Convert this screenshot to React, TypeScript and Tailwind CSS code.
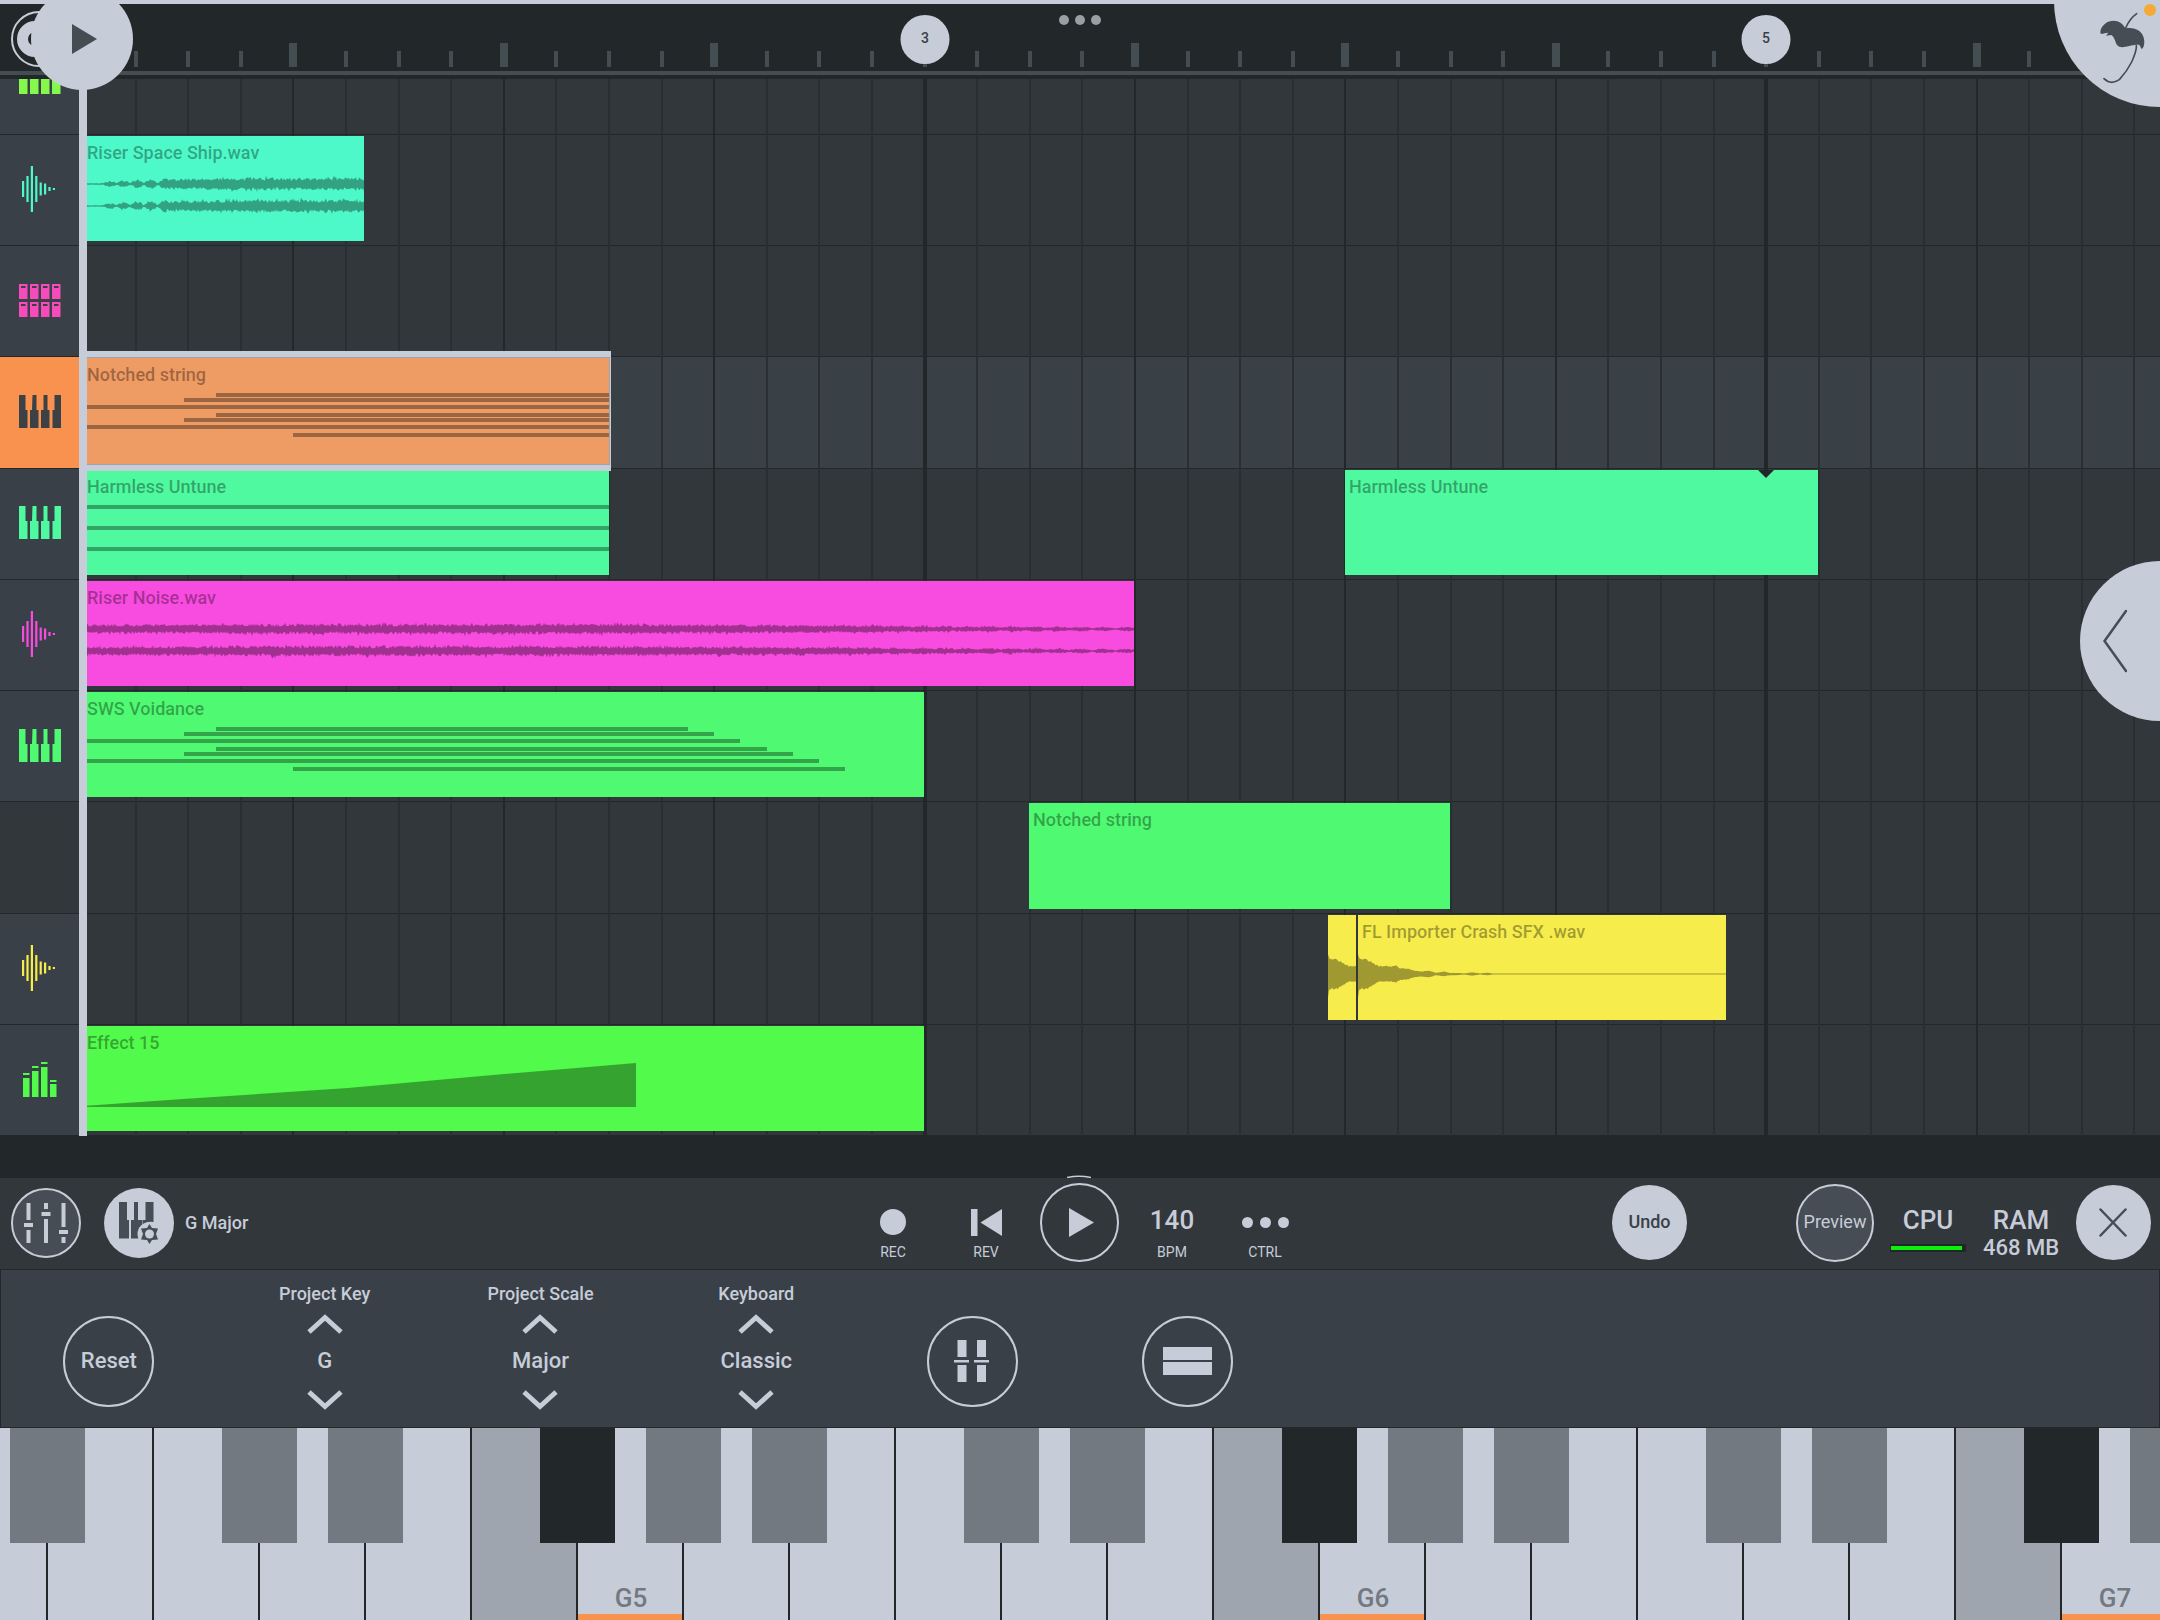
import React from "react";

const STEP = 52.6;
const ORIGIN = 4;
const at = (step: number) => Math.floor(ORIGIN + step * STEP);
const lineAt = (step: number) => Math.round(ORIGIN + step * STEP);

/* ---------- waveforms ---------- */

const noise = (seed: number) => {
  let s = seed;
  return () => {
    s = (s * 16807) % 2147483647;
    return s / 2147483647;
  };
};

function wavePath(width: number, center: number, seed: number, amp: (x: number) => number, jitter: number) {
  const rnd = noise(seed);
  const top: string[] = [];
  const bottom: string[] = [];
  for (let x = 0; x <= width; x += 1) {
    const a = amp(x);
    const up = a * (1 - jitter + rnd() * jitter * (rnd() > 0.85 ? 1.9 : 1.2));
    const dn = a * (1 - jitter + rnd() * jitter * (rnd() > 0.85 ? 1.9 : 1.2));
    top.push(`${x} ${(center - up).toFixed(1)}`);
    bottom.push(`${x} ${(center + dn).toFixed(1)}`);
  }
  return `M${top.join("L")}L${bottom.reverse().join("L")}Z`;
}

const shipAmp = (x: number) => {
  if (x < 20) return 0.8;
  if (x < 85) return 0.9 + Math.abs(Math.sin(((x - 20) / 13) * (Math.PI / 1.05))) * (1.6 + (x - 20) / 20);
  return Math.min(6, 4.8 + (x - 85) / 60);
};

const noiseAmp = (x: number) => {
  if (x < 500) return 4 + Math.min(1, x / 200);
  const fall = 5 - ((x - 500) / 552) * 2.8;
  if (x < 800) return fall;
  const low = 2.6 - ((x - 800) / 252) * 2;
  return low + (fall - low) * Math.abs(Math.cos((x - 952) / 7.26));
};

const crashPoints: [number, number][] = [
  [0, 22], [1, 17], [4, 14.5], [6, 16], [13, 13], [18, 9.5], [22, 7.5], [27, 8], [33, 7.5], [38, 9], [42, 6],
  [50, 5.5], [56, 3.5], [63, 2.5], [71, 3.5], [78, 1.2], [86, 2.4], [92, 1.2], [100, 1.2], [106, 0.6],
  [114, 1.8], [122, 0.6], [130, 1.3], [135, 0.5], [400, 0.5],
];
const crashAmp = (x: number) => {
  for (let i = 1; i < crashPoints.length; i += 1) {
    const [x1, y1] = crashPoints[i];
    const [x0, y0] = crashPoints[i - 1];
    if (x <= x1) return y0 + ((x - x0) / (x1 - x0)) * (y1 - y0);
  }
  return 0.5;
};

/* ---------- track icons ---------- */

function WaveIcon() {
  const bars = [16, 26, 46, 26, 13, 11, 4, 2];
  return (
    <svg width="35" height="46" viewBox="0 0 35 46" fill="currentColor" aria-hidden="true">
      {bars.map((h, i) => (
        <rect key={i} x={i * 4.4} y={23 - h / 2} width="2.2" height={h} />
      ))}
    </svg>
  );
}

function PadsIcon() {
  return (
    <svg width="42" height="33" viewBox="0 0 42 33" aria-hidden="true">
      {[0, 1, 2, 3].map((c) =>
        [0, 18].map((y) => (
          <g key={`${c}-${y}`}>
            <rect x={c * 11} y={y} width="8.5" height="15" fill="currentColor" />
            <rect x={c * 11 + 2} y={y + 2} width="4.5" height="2" fill="#3a3f46" />
          </g>
        )),
      )}
    </svg>
  );
}

function PadFeetIcon() {
  return (
    <svg width="42" height="15" viewBox="0 0 42 15" fill="currentColor" aria-hidden="true">
      {[0, 11, 22, 33].map((x) => (
        <rect key={x} x={x} width="8.5" height="15" />
      ))}
    </svg>
  );
}

function PianoIcon() {
  return (
    <svg width="42" height="33" viewBox="0 0 42 33" fill="currentColor" aria-hidden="true">
      <path d="M0 0h6.500v15h2v18H0zM13.500 0h4v15h2v18h-8.500V15h2zM24.500 0h4v15h2v18H22V15h2.500zM35.500 0H42v33h-8.500V15h2z" />
    </svg>
  );
}

function LevelsIcon() {
  const bars = [
    [19, 24],
    [26, 31],
    [30, 35],
    [13, 17],
  ];
  return (
    <svg width="34" height="36" viewBox="0 0 34 36" fill="currentColor" aria-hidden="true">
      {bars.map(([h, cap], i) => (
        <g key={i}>
          <rect x={i * 9} y={36 - h} width="6.500" height={h} />
          <rect x={i * 9} y={36 - cap} width="6.500" height="2" />
        </g>
      ))}
    </svg>
  );
}

/* ---------- clips ---------- */

type Note = [number, number, number];

function Notes({ items }: { items: Note[] }) {
  return (
    <svg className="absolute inset-0 h-full w-full" fill="black" fillOpacity="0.34" aria-hidden="true">
      {items.map(([x, y, w], i) => (
        <rect key={i} x={x} y={y - 2} width={w} height="4" />
      ))}
    </svg>
  );
}

function Wave({ paths }: { paths: string[] }) {
  return (
    <svg className="absolute inset-0 h-full w-full" fill="black" fillOpacity="0.35" aria-hidden="true">
      {paths.map((d, i) => (
        <path key={i} d={d} />
      ))}
    </svg>
  );
}

type ClipProps = {
  left: number;
  width: number;
  color: string;
  name?: string;
  selected?: boolean;
  children?: React.ReactNode;
};

function Clip({ left, width, color, name, selected, children }: ClipProps) {
  return (
    <button
      type="button"
      aria-label={name ?? "Clip"}
      aria-pressed={!!selected}
      className={`absolute top-px flex items-start overflow-hidden px-1 pt-[5px] text-left ${color} ${
        selected
          ? "bottom-1 z-20 shadow-[0_0_0_1px_#9aa3ae,0_-7px_0_#c7ccd9,0_7px_0_#c7ccd9,2px_-7px_0_#c7ccd9,2px_7px_0_#c7ccd9]"
          : "bottom-1 z-10"
      }`}
      style={{ left, width }}
    >
      <span className="whitespace-nowrap text-[18px] leading-6 text-black/35">{name}</span>
      {children}
    </button>
  );
}

const notchedNotes: Note[] = [
  [133, 37, 400], [101, 42, 430], [0, 49, 530], [133, 57, 400], [101, 62, 430], [0, 69, 530], [210, 77, 320],
];
const voidanceNotes: Note[] = [
  [133, 37, 472], [101, 42, 530], [0, 49, 657], [133, 57, 551], [101, 62, 609], [0, 69, 736], [210, 77, 552],
];
const harmlessNotes: Note[] = [
  [0, 37, 530],
  [0, 58, 530],
  [0, 79, 530],
];

type Track = {
  label: string;
  icon?: React.ReactNode;
  header: string;
  lane?: string;
  clips?: React.ReactNode;
};

const tracks: Track[] = [
  {
    label: "Riser Space Ship",
    icon: <WaveIcon />,
    header: "bg-[#394047] text-[#4df9c9]",
    clips: (
      <Clip left={at(0)} width={281} color="bg-[#4df9c9]" name="Riser Space Ship.wav">
        <Wave paths={[wavePath(281, 48, 71, shipAmp, 0.45), wavePath(281, 70, 193, shipAmp, 0.45)]} />
      </Clip>
    ),
  },
  { label: "Drum pads", icon: <PadsIcon />, header: "bg-[#394047] text-[#f84bbb]" },
  {
    label: "Notched string",
    icon: <PianoIcon />,
    header: "bg-[#f8924e] text-[#3c4145]",
    lane: "bg-[#394046]",
    clips: (
      <Clip left={at(0)} width={526} color="bg-[#ef9b64]" name="Notched string" selected>
        <Notes items={notchedNotes} />
      </Clip>
    ),
  },
  {
    label: "Harmless Untune",
    icon: <PianoIcon />,
    header: "bg-[#394047] text-[#4ef99f]",
    clips: (
      <>
        <Clip left={at(0)} width={526} color="bg-[#4ef99f]" name="Harmless Untune">
          <Notes items={harmlessNotes} />
        </Clip>
        <Clip left={at(24)} width={473} color="bg-[#4ef99f]" name="Harmless Untune">
          <svg className="absolute top-0 left-[413px]" width="16" height="8" viewBox="0 0 16 8" aria-hidden="true">
            <path d="M0 0h16L8 8z" fill="#22272a" />
          </svg>
        </Clip>
      </>
    ),
  },
  {
    label: "Riser Noise",
    icon: <WaveIcon />,
    header: "bg-[#394047] text-[#f84bdf]",
    clips: (
      <Clip left={at(0)} width={1051} color="bg-[#f84bdf]" name="Riser Noise.wav">
        <Wave paths={[wavePath(1051, 48, 517, noiseAmp, 0.5), wavePath(1051, 70, 881, noiseAmp, 0.5)]} />
      </Clip>
    ),
  },
  {
    label: "SWS Voidance",
    icon: <PianoIcon />,
    header: "bg-[#394047] text-[#4ff972]",
    clips: (
      <Clip left={at(0)} width={841} color="bg-[#4ff972]" name="SWS Voidance">
        <Notes items={voidanceNotes} />
      </Clip>
    ),
  },
  {
    label: "Empty track",
    header: "bg-[#32373b]",
    clips: <Clip left={at(18)} width={421} color="bg-[#4ff972]" name="Notched string" />,
  },
  {
    label: "Crash",
    icon: <WaveIcon />,
    header: "bg-[#394047] text-[#f6ec4c]",
    clips: (
      <>
        <Clip left={1249} width={28} color="bg-[#f6ec4c]">
          <Wave paths={[wavePath(28, 59, 37, crashAmp, 0.1)]} />
        </Clip>
        <Clip left={1279} width={368} color="bg-[#f6ec4c]" name="FL Importer Crash SFX .wav">
          <Wave paths={[wavePath(368, 59, 37, crashAmp, 0.1)]} />
        </Clip>
      </>
    ),
  },
  {
    label: "Effect 15",
    icon: <LevelsIcon />,
    header: "bg-[#394047] text-[#52fa4b]",
    clips: (
      <Clip left={at(0)} width={841} color="bg-[#52fa4b]" name="Effect 15">
        <Wave paths={["M0 80L100 73L265 62L410 49L553 37V81H0Z"]} />
      </Clip>
    ),
  },
];

const steps = Array.from({ length: 72 }, (_, i) => i + 1);

/* ---------- sections ---------- */

function Ruler() {
  return (
    <div className="relative h-[79px] overflow-hidden border-t-4 border-[#c7ccd9] bg-[#22272a]">
      <div className="absolute inset-x-0 top-[67px] h-1 bg-[#444d50]" />
      <div className="absolute inset-y-0 right-0 left-[79px]">
        {steps.map((s) => (
          <span
            key={s}
            className={`absolute bottom-3 -translate-x-1/2 bg-[#444d52] ${s % 4 === 0 && s % 16 !== 0 ? "h-6 w-2" : "h-4 w-1"}`}
            style={{ left: lineAt(s) }}
          />
        ))}
        {[3, 5].map((bar) => (
          <button
            key={bar}
            type="button"
            className="absolute top-[11px] size-[49px] -translate-x-1/2 rounded-full bg-[#c7ccd9] pb-0.5 text-[14px] text-[#3a4046]"
            style={{ left: lineAt((bar - 1) * 8) }}
          >
            {bar}
          </button>
        ))}
      </div>
      <div className="absolute top-[11px] left-1/2 flex -translate-x-1/2 gap-1.5">
        <span className="size-2.5 rounded-full bg-[#9a9fa3]" />
        <span className="size-2.5 rounded-full bg-[#9a9fa3]" />
        <span className="size-2.5 rounded-full bg-[#9a9fa3]" />
      </div>
    </div>
  );
}

function Playlist() {
  return (
    <div className="relative flex flex-1 flex-col overflow-hidden bg-[#32373b]">
      <div className="flex h-14 border-b border-[#22272a]">
        <div className="flex w-[79px] justify-center bg-[#394047] text-[#84f94c]">
          <PadFeetIcon />
        </div>
      </div>
      <div className="grid flex-1 auto-rows-fr">
        {tracks.map((t) => (
          <div key={t.label} className="flex min-h-24 border-b border-[#22272a]">
            <button
              type="button"
              aria-label={t.label}
              className={`flex w-[79px] items-center justify-center pb-0.5 ${t.header}`}
            >
              {t.icon}
            </button>
            <div className={`relative flex-1 ${t.lane ?? ""}`}>{t.clips}</div>
          </div>
        ))}
      </div>
      <div className="pointer-events-none absolute inset-y-0 right-0 left-[79px] overflow-hidden">
        {steps.map((s) => (
          <span
            key={s}
            className={`absolute inset-y-0 -translate-x-1/2 ${
              s % 16 === 0 ? "w-1 bg-[#22272a]" : s % 4 === 0 ? "w-0.5 bg-[#22272a]" : "w-0.5 bg-[#292e32]"
            }`}
            style={{ left: lineAt(s) }}
          />
        ))}
      </div>
      <div className="absolute inset-y-0 left-[79px] z-30 w-2 bg-[#c7ccd9]" />
    </div>
  );
}

function PalmIcon() {
  return (
    <svg width="46" height="72" viewBox="0 0 138 216" fill="none" stroke="#464d54" strokeLinecap="round" aria-hidden="true">
      <path d="M113 5Q92 20 80 48" strokeWidth="5" />
      <path
        d="M4 62C4 48 14 35 28 29C50 21 70 30 79 49C92 46 110 48 121 57C134 68 138 84 135 100Q132 112 127 110L122 100Q117 95 106 99C92 100 84 105 70 106Q56 106 51 94C47 82 45 75 37 69L21 71L28 62L17 64Q4 68 4 62Z"
        fill="#464d54"
        stroke="none"
      />
      <path d="M112 100Q114 114 98 150Q84 178 61 203Q36 220 15 200" strokeWidth="5" />
    </svg>
  );
}

function Overlays() {
  return (
    <>
      <button
        type="button"
        aria-label="Loop"
        className="absolute top-[11px] left-[11px] z-30 flex size-14 items-center rounded-full border-2 border-[#c7ccd9] pl-1"
      >
        <span className="size-9 rounded-full border-[11px] border-[#c7ccd9]" />
      </button>
      <button
        type="button"
        aria-label="Play from position"
        className="absolute -top-3 left-[31px] z-40 flex size-[102px] items-center justify-center rounded-full bg-[#c7ccd9] pl-1"
      >
        <svg width="25" height="30" viewBox="0 0 25 30" fill="#464d52" aria-hidden="true">
          <path d="M0 0L25 15L0 30z" />
        </svg>
      </button>
      <button
        type="button"
        aria-label="Home menu"
        className="absolute top-0 right-0 z-40 flex h-[107px] w-[106px] items-start rounded-bl-full bg-[#c7ccd9] pt-3 pl-[45px]"
      >
        <PalmIcon />
        <span className="absolute top-1 right-1 size-3 rounded-full bg-[#f6a934]" />
      </button>
      <button
        type="button"
        aria-label="Open side panel"
        className="absolute top-[561px] right-0 z-40 flex h-40 w-20 items-center rounded-l-full bg-[#c7ccd9] pl-[23px]"
      >
        <svg width="24" height="64" viewBox="0 0 24 64" fill="none" stroke="#464d54" strokeWidth="2.500" strokeLinecap="round" aria-hidden="true">
          <path d="M23 2L1.500 32L23 62" />
        </svg>
      </button>
    </>
  );
}

function MixerIcon() {
  return (
    <svg width="44" height="40" viewBox="0 0 44 40" fill="#c7ccd9" aria-hidden="true">
      <path d="M2.500 0h4v17h-4zM0 20h9v4H0zM2.500 27h4v13h-4zM20 0h4v6h-4zM17.500 9h9v4h-9zM20 16h4v24h-4zM37.500 0h4v24h-4zM35 27h9v4h-9zM37.500 34h4v6h-4z" />
    </svg>
  );
}

function KeysSettingsIcon() {
  return (
    <svg width="40" height="42" viewBox="0 0 40 42" aria-hidden="true">
      <path
        fill="#464d54"
        d="M0 0h8v18h2v18.500H0zM15 0h4v18h4.500V27L20 36.500h-8V18h3zM26.500 0h8v20Q28 19 24 23V18h2.500z"
      />
      <circle cx="30.500" cy="32" r="12" fill="#c7ccd9" />
      <path
        fill="#464d54"
        d="M30.500 22L33 26L39 26.500L37 32L39 37.500L33 38L30.500 42L28 38L22 37.500L24 32L22 26.500L28 26Z"
      />
      <circle cx="30.500" cy="32" r="4.500" fill="#c7ccd9" />
    </svg>
  );
}

function TransportItem({ label, children }: { label: string; children: React.ReactNode }) {
  return (
    <button type="button" className="flex w-[93px] flex-col items-center pt-[26px]">
      <span className="flex h-9 items-center">{children}</span>
      <span className="mt-1 text-[14px] leading-4 font-normal">{label}</span>
    </button>
  );
}

function Transport() {
  return (
    <div className="relative z-10 grid h-[92px] grid-cols-[1fr_auto_1fr] border-b border-[#22272a] bg-[#32373b] text-[#c7ccd9]">
      <div className="flex items-center pb-0.5 pl-[11px]">
        <button
          type="button"
          aria-label="Mixer"
          className="flex size-[70px] items-center justify-center rounded-full border-2 border-[#c7ccd9] bg-[#464d54]"
        >
          <MixerIcon />
        </button>
        <button
          type="button"
          aria-label="Keyboard settings"
          className="ml-[23px] flex size-[70px] items-center justify-center rounded-full bg-[#c7ccd9]"
        >
          <KeysSettingsIcon />
        </button>
        <span className="ml-[11px] text-[18px] leading-6">G Major</span>
      </div>
      <div className="relative flex pr-0.5">
        <svg className="absolute -top-[3px] left-[220px]" width="24" height="3" viewBox="0 0 24 3" fill="none" aria-hidden="true">
          <path d="M0 2.500Q12 0 24 2.500" stroke="#c7ccd9" strokeWidth="1.500" />
        </svg>
        <TransportItem label="REC">
          <span className="size-[26px] rounded-full bg-[#c7ccd9]" />
        </TransportItem>
        <TransportItem label="REV">
          <svg width="31" height="27" viewBox="0 0 31 27" fill="currentColor" aria-hidden="true">
            <path d="M0 0h6.500v27H0zM31 0v27L9.500 13.500z" />
          </svg>
        </TransportItem>
        <div className="flex w-[93px] items-center justify-center pb-0.5">
          <button
            type="button"
            aria-label="Play"
            className="flex size-[79px] items-center justify-center rounded-full border-2 border-[#c7ccd9] pl-1"
          >
            <svg width="25" height="29" viewBox="0 0 25 29" fill="currentColor" aria-hidden="true">
              <path d="M0 0L25 14.500L0 29z" />
            </svg>
          </button>
        </div>
        <TransportItem label="BPM">
          <span className="pb-1 text-[26px] leading-8">140</span>
        </TransportItem>
        <TransportItem label="CTRL">
          <span className="flex gap-[7px]">
            <span className="size-[11px] rounded-full bg-[#c7ccd9]" />
            <span className="size-[11px] rounded-full bg-[#c7ccd9]" />
            <span className="size-[11px] rounded-full bg-[#c7ccd9]" />
          </span>
        </TransportItem>
      </div>
      <div className="flex items-center justify-end pr-[9px] pb-0.5">
        <button type="button" className="size-[75px] rounded-full bg-[#c7ccd9] pb-0.5 text-[18px] text-[#3a4046]">
          Undo
        </button>
        <button
          type="button"
          className="ml-[109px] flex size-[78px] items-center justify-center rounded-full border-2 border-[#c7ccd9] bg-[#464d54] pb-0.5 text-[18px] font-normal"
        >
          Preview
        </button>
        <div className="ml-4 flex w-[76px] flex-col items-center self-stretch pt-[26px]">
          <span className="text-[26px] leading-8">CPU</span>
          <span className="mt-2 flex h-2 w-full items-center bg-[#22272a] pr-1 pl-px">
            <span className="h-1 w-full bg-[#0cf00c]" />
          </span>
        </div>
        <div className="ml-3 flex w-[86px] flex-col items-center self-stretch pt-[26px]">
          <span className="text-[26px] leading-8">RAM</span>
          <span className="text-[22px] leading-6 whitespace-nowrap">468 MB</span>
        </div>
        <button
          type="button"
          aria-label="Close"
          className="ml-3 flex size-[75px] items-center justify-center rounded-full bg-[#c7ccd9] pr-0.5"
        >
          <svg width="28" height="29" viewBox="0 0 28 29" stroke="#464d54" strokeWidth="2.500" strokeLinecap="round" aria-hidden="true">
            <path d="M1.500 1.500L26.500 27.500M26.500 1.500L1.500 27.500" />
          </svg>
        </button>
      </div>
    </div>
  );
}

function Stepper({ label, value }: { label: string; value: string }) {
  return (
    <div className="flex flex-col items-center pt-3">
      <span className="text-[18px] leading-6">{label}</span>
      <button type="button" aria-label={`Next ${label}`} className="mt-2">
        <svg width="36" height="20" viewBox="0 0 36 20" fill="none" stroke="currentColor" strokeWidth="5" aria-hidden="true">
          <path d="M2 18L18 3.500L34 18" />
        </svg>
      </button>
      <span className="mt-[15px] text-[22px] leading-6">{value}</span>
      <button type="button" aria-label={`Previous ${label}`} className="mt-[17px]">
        <svg width="36" height="20" viewBox="0 0 36 20" fill="none" stroke="currentColor" strokeWidth="5" aria-hidden="true">
          <path d="M2 2L18 16.500L34 2" />
        </svg>
      </button>
    </div>
  );
}

function KeyPanel() {
  const round = "mt-[46px] flex size-[91px] items-center justify-center justify-self-center rounded-full border-2 border-[#c7ccd9]";
  return (
    <div className="grid h-[158px] grid-cols-10 items-start border-x border-b border-[#22272a] bg-[#394047] text-[#c7ccd9]">
      <button type="button" className={`${round} pb-0.5 text-[22px]`}>
        Reset
      </button>
      <Stepper label="Project Key" value="G" />
      <Stepper label="Project Scale" value="Major" />
      <Stepper label="Keyboard" value="Classic" />
      <button type="button" aria-label="Split keys" className={`${round} pb-0.5`}>
        <svg width="36" height="42" viewBox="0 0 36 42" fill="currentColor" aria-hidden="true">
          <path d="M3.500 0h9v17h-9zM23 0h9v17h-9zM0 20h15v2.500H0zM20 20h15v2.500H20zM3.500 25h9v17h-9zM23 25h9v17h-9z" />
        </svg>
      </button>
      <button type="button" aria-label="Stacked keyboards" className={`${round} pb-0.5`}>
        <svg width="49" height="28" viewBox="0 0 49 28" fill="currentColor" aria-hidden="true">
          <path d="M0 0h49v13H0zM0 15h49v13H0z" />
        </svg>
      </button>
    </div>
  );
}

/* One octave of white keys; `sharp` is the black key on the right edge. */
const octave = [
  { note: "A", sharp: "bg-[#727980]" },
  { note: "B", sharp: "" },
  { note: "C", sharp: "bg-[#727980]" },
  { note: "D", sharp: "bg-[#727980]" },
  { note: "E", sharp: "" },
  { note: "F", sharp: "bg-[#22272a]" },
  { note: "G", sharp: "bg-[#727980]" },
];
const pianoKeys = Array.from({ length: 21 }, (_, i) => ({
  ...octave[i % 7],
  number: 5 + Math.floor(i / 7),
}));

function Keyboard() {
  return (
    <div className="flex h-48 overflow-hidden bg-[#c7ccd9]">
      <div className="-ml-[58px] flex">
        {pianoKeys.map((k) => (
          <div
            key={`${k.note}${k.number}`}
            className={`relative flex w-[106px] shrink-0 flex-col justify-end border-r-2 border-[#22272a] text-center ${
              k.note === "F" ? "bg-[#9fa5af]" : "bg-[#c7ccd9]"
            }`}
          >
            {k.note === "G" && (
              <>
                <span className="pl-0.5 text-[26px] leading-8 text-[#727980]">G{k.number}</span>
                <span className="h-1.5 bg-[#f8924e]" />
              </>
            )}
            {k.sharp && <span className={`absolute top-0 -right-[39px] z-10 h-[115px] w-[75px] ${k.sharp}`} />}
          </div>
        ))}
      </div>
    </div>
  );
}

export default function App() {
  return (
    <main className="relative flex min-h-screen flex-col overflow-hidden bg-[#22272a] font-['Roboto',sans-serif] font-medium">
      <Ruler />
      <Playlist />
      <div className="h-[42px] bg-[#22272a]" />
      <Transport />
      <KeyPanel />
      <Keyboard />
      <Overlays />
    </main>
  );
}
